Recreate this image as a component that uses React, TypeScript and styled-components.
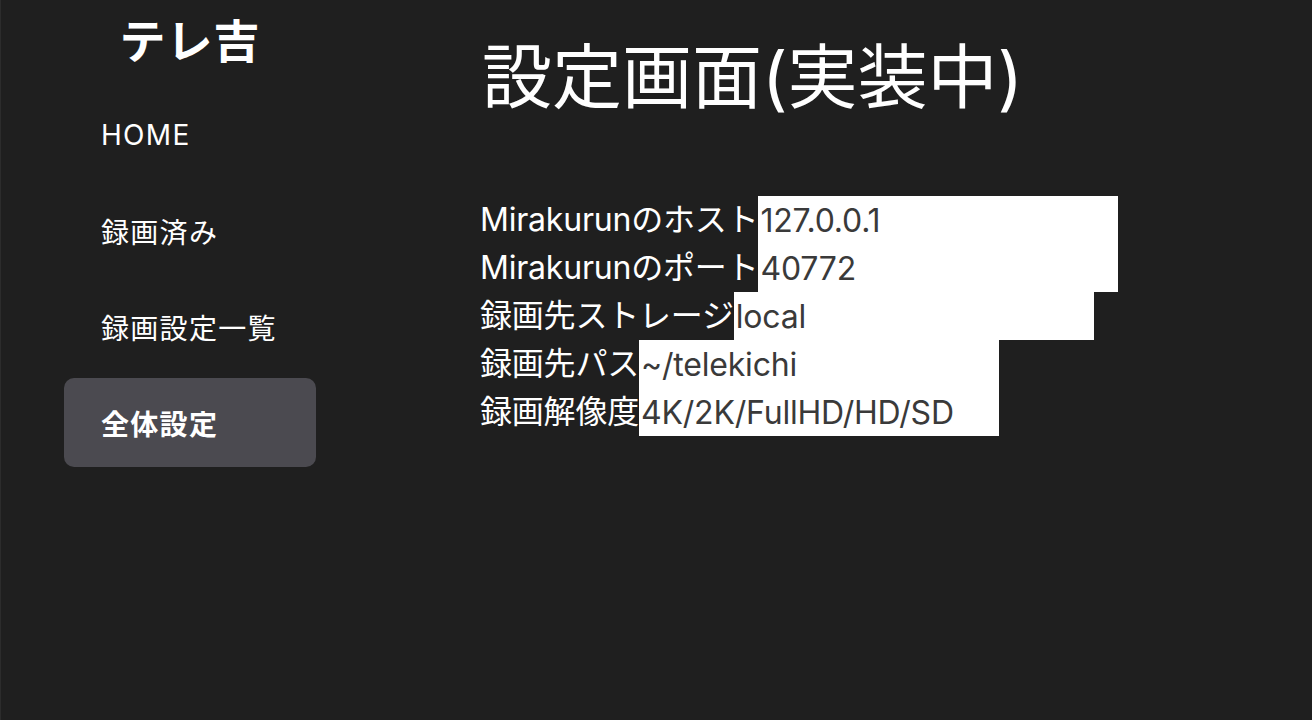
import React from "react";
import styled, { createGlobalStyle } from "styled-components";

const Global = createGlobalStyle`
  html, body { margin: 0; padding: 0; background: #1f1f1f; }
  body {
    font-family: Inter, "Noto Sans CJK JP", sans-serif;
    color: #ffffff;
  }
  * { box-sizing: border-box; }
`;

const Page = styled.div`
  display: flex;
  width: 1312px;
  height: 720px;
  background: #1f1f1f;
  border-left: 1px solid #2c2c2c;
  overflow: hidden;
`;

const Sidebar = styled.nav`
  display: flex;
  flex-direction: column;
  width: 479px;
  padding: 9px 0 0 63px;
  flex-shrink: 0;
`;

const Logo = styled.div`
  width: 252px;
  text-align: center;
  font-size: 46px;
  font-weight: 700;
  line-height: 64px;
  margin-bottom: 17px;
  letter-spacing: 1px;
`;

const Menu = styled.ul`
  list-style: none;
  margin: 0;
  padding: 0;
  display: flex;
  flex-direction: column;
  gap: 7px;
  width: 252px;
`;

const MenuItem = styled.li<{ $active?: boolean }>`
  height: 89px;
  display: flex;
  align-items: center;
  padding-left: 37px;
  border-radius: 10px;
  font-size: 28px;
  letter-spacing: 1.3px;
  font-weight: ${(p) => (p.$active ? 700 : 400)};
  background: ${(p) => (p.$active ? "#4b4a50" : "transparent")};
`;

const Main = styled.main`
  display: flex;
  flex-direction: column;
  padding-top: 30px;
`;

const Title = styled.h1`
  margin: 0 0 70px 2px;
  font-size: 70px;
  font-weight: 400;
  line-height: 96px;
`;

const Form = styled.div`
  display: flex;
  flex-direction: column;
`;

const Row = styled.label`
  display: flex;
  align-items: center;
  height: 48px;
  font-size: 32px;
  line-height: 48px;
`;

const Label = styled.span`
  white-space: nowrap;
  letter-spacing: -0.2px;
`;

const Input = styled.input`
  width: 360px;
  height: 48px;
  border: none;
  outline: none;
  margin: 0;
  padding: 0 2px;
  background: #ffffff;
  color: #3a3a3a;
  font-family: Inter, "Noto Sans CJK JP", sans-serif;
  font-size: 32px;
  letter-spacing: -0.2px;
`;

const fields = [
  { label: "Mirakurunのホスト", value: "127.0.0.1" },
  { label: "Mirakurunのポート", value: "40772" },
  { label: "録画先ストレージ", value: "local" },
  { label: "録画先パス", value: "~/telekichi" },
  { label: "録画解像度", value: "4K/2K/FullHD/HD/SD" },
];

export default function App() {
  return (
    <>
      <Global />
      <Page>
        <Sidebar>
          <Logo>テレ吉</Logo>
          <Menu>
            <MenuItem>HOME</MenuItem>
            <MenuItem>録画済み</MenuItem>
            <MenuItem>録画設定一覧</MenuItem>
            <MenuItem $active>全体設定</MenuItem>
          </Menu>
        </Sidebar>
        <Main>
          <Title>設定画面(実装中)</Title>
          <Form>
            {fields.map((f) => (
              <Row key={f.label}>
                <Label>{f.label}</Label>
                <Input defaultValue={f.value} readOnly />
              </Row>
            ))}
          </Form>
        </Main>
      </Page>
    </>
  );
}
